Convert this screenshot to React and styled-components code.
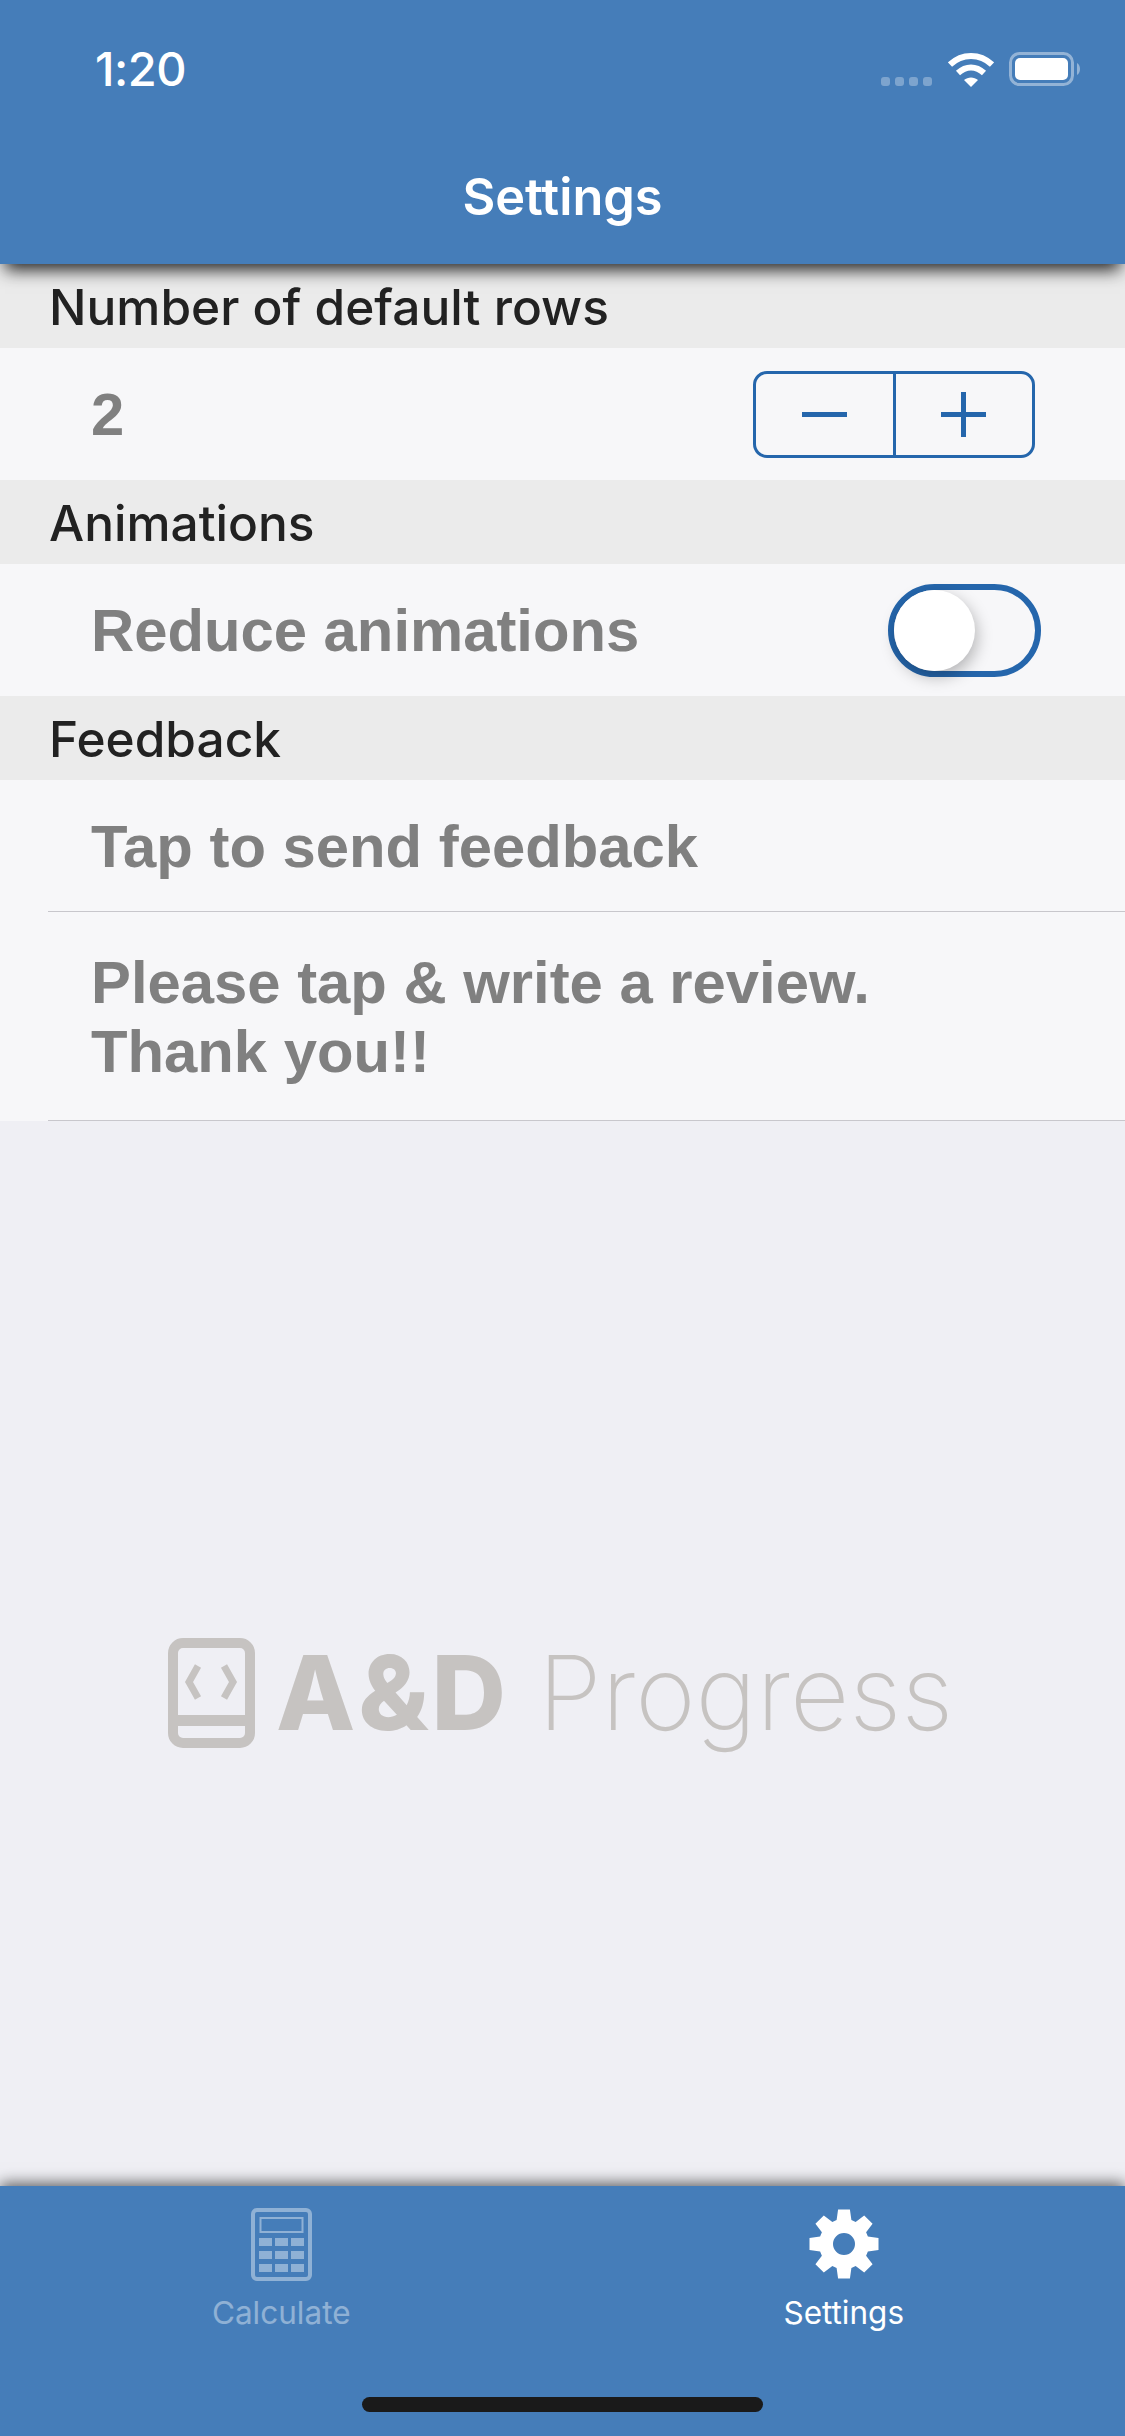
import React from "react";
import styled, { createGlobalStyle } from "styled-components";

const Global = createGlobalStyle`
  html, body { margin: 0; padding: 0; background: #efeff4; }
`;

const Page = styled.div`
  width: 1125px;
  height: 2436px;
  display: flex;
  flex-direction: column;
  background: #efeff4;
  overflow: hidden;
`;

const Header = styled.header`
  height: 264px;
  flex: none;
  box-sizing: border-box;
  background: #457db9;
  position: relative;
  z-index: 2;
  box-shadow: 0 11px 16px -5px rgba(0, 0, 0, 0.85);
  display: flex;
  flex-direction: column;
`;

const StatusBar = styled.div`
  height: 165px;
  box-sizing: border-box;
  padding: 46px 42px 0 95px;
  display: flex;
  justify-content: space-between;
  align-items: flex-start;
`;

const Time = styled.div`
  font: 500 47px/46px Inter, sans-serif;
  letter-spacing: -0.5px;
  color: #fff;
`;

const StatusIcons = styled.div`
  display: flex;
  align-items: flex-start;
  padding-top: 6px;
`;

const Title = styled.h1`
  margin: 0;
  text-align: center;
  font: 600 50.5px/64px Inter, sans-serif;
  color: #fff;
`;

const SectionHeader = styled.div`
  height: 84px;
  box-sizing: border-box;
  padding: 3px 0 0 49px;
  background: #ebebeb;
  display: flex;
  align-items: center;
  font: 550 49.6px/1 Inter, sans-serif;
  color: #222;
`;

const Row = styled.div`
  height: ${(p) => p.$h}px;
  box-sizing: border-box;
  background: #f7f7f9;
  padding: 0 ${(p) => p.$pr || 0}px 0 91px;
  display: flex;
  align-items: center;
  justify-content: space-between;
  font: 700 59.8px/69px "Liberation Sans", Arial, sans-serif;
  color: #808080;
  position: relative;
  ${(p) =>
    p.$divider &&
    `&::after {
      content: "";
      position: absolute;
      left: 48px;
      right: 0;
      bottom: 0;
      height: 1px;
      background: #c8c7cc;
    }`}
`;

const Stepper = styled.div`
  width: 282px;
  height: 87px;
  box-sizing: border-box;
  border: 3px solid #2566ac;
  border-radius: 14px;
  display: flex;
`;

const StepButton = styled.div`
  flex: 1;
  display: flex;
  align-items: center;
  justify-content: center;
  & + & {
    border-left: 3px solid #2566ac;
  }
`;

const Toggle = styled.div`
  width: 153px;
  height: 93px;
  box-sizing: border-box;
  border: 6px solid #2566ac;
  border-radius: 47px;
  display: flex;
  align-items: center;
`;

const Knob = styled.div`
  width: 81px;
  height: 81px;
  border-radius: 50%;
  background: #fff;
  box-shadow: 2px 6px 16px rgba(0, 0, 0, 0.28);
`;

const Main = styled.main`
  flex: 1;
  padding-top: 517px;
  box-sizing: border-box;
`;

const Logo = styled.div`
  display: flex;
  align-items: flex-start;
  padding-left: 168px;
  color: #c6c3c1;
`;

const LogoBold = styled.span`
  font: 800 103px/109px Inter, sans-serif;
  letter-spacing: 3px;
  margin-left: 21px;
`;

const LogoLight = styled.span`
  font: 250 103px/109px Inter, sans-serif;
  margin-left: 29px;
`;

const TabBar = styled.footer`
  height: 250px;
  flex: none;
  background: #457db9;
  position: relative;
  z-index: 2;
  box-shadow: 0 -3px 14px rgba(0, 0, 0, 0.6);
  display: flex;
  flex-direction: column;
`;

const Tabs = styled.div`
  display: grid;
  grid-template-columns: 1fr 1fr;
  padding-top: 20px;
`;

const Tab = styled.div`
  display: flex;
  flex-direction: column;
  align-items: center;
  opacity: ${(p) => (p.$active ? 1 : 0.4)};
  color: #fff;
`;

const TabIcon = styled.div`
  height: 76px;
  display: flex;
  align-items: center;
  justify-content: center;
`;

const TabLabel = styled.div`
  margin-top: 13px;
  font: 400 31.5px/36px Inter, sans-serif;
`;

const HomeIndicator = styled.div`
  width: 401px;
  height: 15px;
  margin: 66px auto 0;
  border-radius: 8px;
  background: #1a1a1a;
`;

const SignalDots = () => (
  <svg width="52" height="46" viewBox="0 0 52 46" style={{ marginRight: 15 }}>
    {[0, 14, 28, 42].map((x) => (
      <rect key={x} x={x} y="25" width="9" height="9" rx="3" fill="#fff" opacity="0.3" />
    ))}
  </svg>
);

const Wifi = () => (
  <svg width="46" height="36" viewBox="0 0 46 36" style={{ marginRight: 15 }}>
    <path d="M2 12.5 C14 1 32 1 44 12.5" fill="none" stroke="#fff" strokeWidth="6" />
    <path d="M10 21 C18 13.5 28 13.5 36 21" fill="none" stroke="#fff" strokeWidth="6" />
    <path d="M16 28 C20 24.5 26 24.5 30 28 L23 35 Z" fill="#fff" />
  </svg>
);

const Battery = () => (
  <svg width="74" height="36" viewBox="0 0 74 36">
    <rect x="1.5" y="1.5" width="62" height="31" rx="9" fill="none" stroke="#fff" strokeOpacity="0.42" strokeWidth="3" />
    <rect x="6" y="6" width="53" height="22" rx="5" fill="#fff" />
    <path d="M68 11 C72 13 72 21 68 23 Z" fill="#fff" opacity="0.42" />
  </svg>
);

const Minus = () => (
  <svg width="45" height="5" viewBox="0 0 45 5">
    <rect width="45" height="5" fill="#2566ac" />
  </svg>
);

const Plus = () => (
  <svg width="45" height="45" viewBox="0 0 45 45">
    <rect y="20" width="45" height="5" fill="#2566ac" />
    <rect x="20" width="5" height="45" fill="#2566ac" />
  </svg>
);

const LogoMark = () => (
  <svg width="87" height="110" viewBox="0 0 87 110">
    <rect x="5" y="5" width="77" height="100" rx="10" fill="none" stroke="#c6c3c1" strokeWidth="10" />
    <rect x="5" y="77" width="77" height="11" fill="#c6c3c1" />
    <path d="M30 28 L21 44 L30 60" fill="none" stroke="#c6c3c1" strokeWidth="7" />
    <path d="M56 28 L65 44 L56 60" fill="none" stroke="#c6c3c1" strokeWidth="7" />
  </svg>
);

const Calculator = () => (
  <svg width="61" height="73" viewBox="0 0 61 73" fill="#fff">
    <rect x="2" y="2" width="57" height="69" rx="4" fill="none" stroke="#fff" strokeWidth="4" />
    <rect x="9.5" y="10" width="42" height="14" fill="none" stroke="#fff" strokeWidth="2" />
    {[30, 43, 56].map((y) =>
      [8, 24, 40].map((x) => <rect key={`${x}-${y}`} x={x} y={y} width="13" height="8" />)
    )}
  </svg>
);

const gearPath = (() => {
  const cx = 35, cy = 35;
  const pts = [];
  for (let i = 0; i < 8; i++) {
    const a = (i * Math.PI) / 4 - Math.PI / 2;
    const at = (r, d) => {
      const t = a + d;
      return `${(cx + r * Math.cos(t)).toFixed(2)} ${(cy + r * Math.sin(t)).toFixed(2)}`;
    };
    pts.push(at(25, -0.3), at(35, -0.17), at(35, 0.17), at(25, 0.3));
  }
  return `M${pts.join(" L")} Z M46 35 A11 11 0 1 0 24 35 A11 11 0 1 0 46 35 Z`;
})();

const Gear = () => (
  <svg width="70" height="70" viewBox="0 0 70 70">
    <path d={gearPath} fill="#fff" fillRule="evenodd" />
  </svg>
);

export default function App() {
  return (
    <Page>
      <Global />
      <Header>
        <StatusBar>
          <Time>1:20</Time>
          <StatusIcons>
            <SignalDots />
            <Wifi />
            <Battery />
          </StatusIcons>
        </StatusBar>
        <Title>Settings</Title>
      </Header>
      <SectionHeader>Number of default rows</SectionHeader>
      <Row $h={132} $pr={90}>
        <span>2</span>
        <Stepper>
          <StepButton><Minus /></StepButton>
          <StepButton><Plus /></StepButton>
        </Stepper>
      </Row>
      <SectionHeader>Animations</SectionHeader>
      <Row $h={132} $pr={84}>
        <span>Reduce animations</span>
        <Toggle><Knob /></Toggle>
      </Row>
      <SectionHeader>Feedback</SectionHeader>
      <Row $h={132} $divider>
        <span>Tap to send feedback</span>
      </Row>
      <Row $h={209} $divider>
        <span>Please tap &amp; write a review.<br />Thank you!!</span>
      </Row>
      <Main>
        <Logo>
          <LogoMark />
          <LogoBold>A&amp;D</LogoBold>
          <LogoLight>Progress</LogoLight>
        </Logo>
      </Main>
      <TabBar>
        <Tabs>
          <Tab>
            <TabIcon><Calculator /></TabIcon>
            <TabLabel>Calculate</TabLabel>
          </Tab>
          <Tab $active>
            <TabIcon><Gear /></TabIcon>
            <TabLabel>Settings</TabLabel>
          </Tab>
        </Tabs>
        <HomeIndicator />
      </TabBar>
    </Page>
  );
}
